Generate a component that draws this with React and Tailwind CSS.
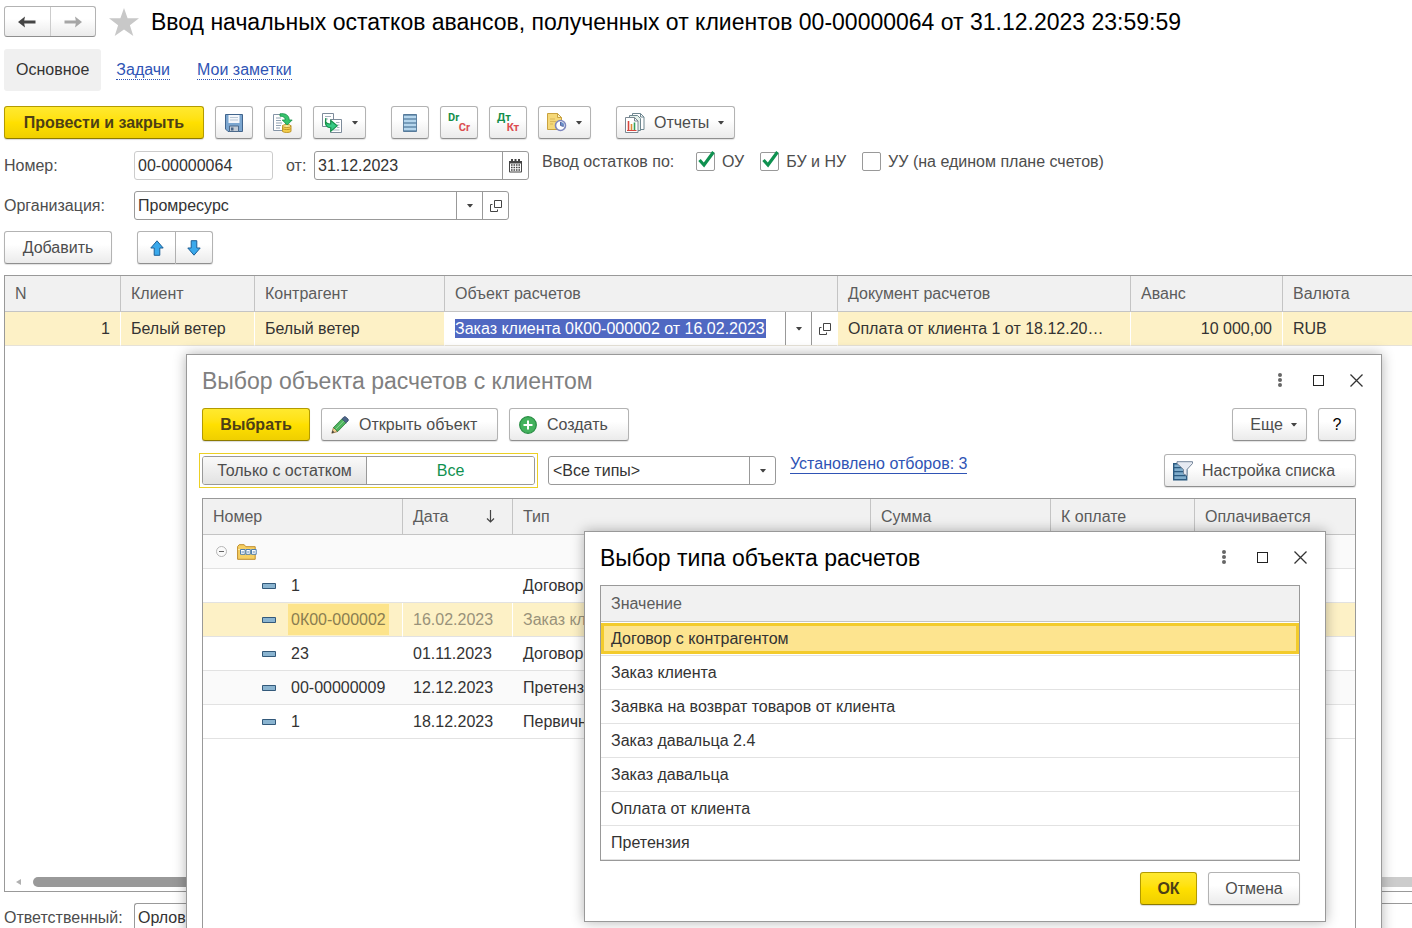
const FONT = "font-['Liberation_Sans',Arial,sans-serif]";

const BTN =
    'flex h-[33px] shrink-0 items-center rounded-[3px] border border-[#b3b3b3] border-b-[#8f8f8f] bg-linear-to-b from-white from-40% to-[#ebebeb] text-[#4d4d4d] shadow-[0_1px_1px_rgba(0,0,0,0.12)]';

const PRIMARY =
    'flex h-[33px] shrink-0 items-center justify-center rounded-[3px] border border-[#b39b00] border-b-[#8c7a00] bg-linear-to-b from-[#ffe92e] via-[#ffe000] to-[#efcf00] font-bold text-[#4d4016] shadow-[0_1px_1px_rgba(0,0,0,0.15)]';

const FIELD = 'flex h-[29px] shrink-0 overflow-hidden rounded-[3px] border border-[#999] bg-white text-[#333]';

const FIELD_BTN = 'flex w-[26px] shrink-0 items-center justify-center border-l border-[#999]';

/* ---------- icons ---------- */

function Caret() {
    return (
        <svg width="6" height="4" viewBox="0 0 6 4" fill="#444">
            <path d="M0 0h6L3.500 3.300h-1z" />
        </svg>
    );
}

function OpenIcon() {
    return (
        <svg width="14" height="14" viewBox="0 0 14 14" fill="none" stroke="#444">
            <path d="M5.500 1.500h7v7h-7z" />
            <path d="M3.500 5.500h-2v7h7v-2" />
        </svg>
    );
}

function ArrowIcon({ color, flip }) {
    return (
        <svg width="18" height="12" viewBox="0 0 18 12" fill={color} className={flip ? 'rotate-180' : ''}>
            <path d="M0 6 7 .5 6.200 4.500H17.500v3H6.200L7 11.500z" />
        </svg>
    );
}

function StarIcon() {
    return (
        <svg width="30" height="28" viewBox="0 0 30 28" fill="#c8c8c8">
            <path d="M15 0l3.600 10.300H30l-9.100 6.900L24.300 28 15 21.500 5.700 28l3.400-10.800L0 10.300h11.400z" />
        </svg>
    );
}

function SaveIcon() {
    return (
        <svg width="18" height="18" viewBox="0 0 18 18">
            <path d="M.5.5h17v17H3l-2.500-2.500z" fill="#7ba6d0" stroke="#41648c" />
            <path d="M3.500 1h11v8h-11z" fill="#f4f7fb" />
            <path d="M5 3.500h8M5 6h8" stroke="#b9c7d6" />
            <path d="M4.500 12h9v5.500h-9z" fill="#c3ccd6" stroke="#4c6a8c" />
            <path d="M6 13.500h2.500v3H6z" fill="#4b6687" />
        </svg>
    );
}

function PostIcon() {
    return (
        <svg width="20" height="20" viewBox="0 0 20 20">
            <path d="M.5 1.500h12v16H.5z" fill="#fff" stroke="#8494a6" />
            <path d="M3 5h5M3 7.500h5M3 10h6M3 12.500h5M3 15h4" stroke="#93a3b3" />
            <path d="M9.500 12.500v6c1.500 1.300 7 1.300 8.500 0v-6z" fill="#f5cf4c" stroke="#bf962a" />
            <ellipse cx="13.750" cy="13" rx="4.250" ry="1.500" fill="#fdeb9c" stroke="#bf962a" />
            <path d="M9.500 15.700c1.500 1.200 7 1.200 8.500 0" stroke="#bf962a" fill="none" />
            <path d="M7 .8c5-.8 9.200 1.200 9.200 6.200h3l-5 5-5-5h3c0-2.600-2-4-5.200-3.800z" fill="#37c46c" stroke="#149148" strokeWidth=".8" />
        </svg>
    );
}

function BasedOnIcon() {
    return (
        <svg width="21" height="20" viewBox="0 0 21 20">
            <path d="M.5.5h11v13H.5z" fill="#fff" stroke="#7d8b9a" />
            <path d="M3 3.500h6M3 6h3" stroke="#a6b2be" />
            <path d="M8.500 6.500h11v13h-11z" fill="#fff" stroke="#7d8b9a" />
            <path d="M14 9.500h3.500M15 12h2.500M15 14.500h2.500M11 17h6.500" stroke="#a6b2be" />
            <path d="M3.800 5v4.200c1.200 1.600 2.700 2 5 1.800V7.500l6.400 5.300-6.400 5.400v-3.400C4.500 15 2.500 12 3.800 5z" fill="#37c984" stroke="#149148" strokeWidth="1.100" />
        </svg>
    );
}

function ListIcon() {
    return (
        <svg width="14" height="18" viewBox="0 0 14 18">
            <path d="M.5.5h13v17H.5z" fill="#a5cbe6" stroke="#6285a4" />
            <path d="M.5 1h13M.5 5h13M.5 9h13M.5 13h13M.5 17h13" stroke="#4b708f" strokeWidth="1.200" />
            <path d="M1 3h12M1 7h12M1 11h12M1 15h12" stroke="#c7e1f3" />
        </svg>
    );
}

function LedgerIcon({ top, bottom }) {
    return (
        <span className="flex w-[22px] flex-col font-['Roboto',sans-serif] text-[11px] leading-[10px] font-bold">
            <span className="self-start text-[#148f4c]">{top}</span>
            <span className="self-end text-[#dc4c50]">{bottom}</span>
        </span>
    );
}

function DocClockIcon() {
    return (
        <svg width="20" height="19" viewBox="0 0 20 19">
            <path d="M.5.5h10l4 4v12H.5z" fill="#f5d878" stroke="#c9a23f" />
            <path d="M10.500.5v4h4z" fill="#fdf2c4" stroke="#c9a23f" />
            <path d="M3 6h5M3 8.500h6M3 11h3" stroke="#d9b75a" />
            <circle cx="13.500" cy="12.500" r="5" fill="#fff" stroke="#7d86bd" strokeWidth="1.600" />
            <path d="M13.500 12.500V8.700a3.800 3.800 0 0 1 3.500 4.800z" fill="#6b8fc9" />
            <path d="M13.500 9v3.500l3 1" stroke="#5866a0" fill="none" />
        </svg>
    );
}

function ReportIcon() {
    return (
        <svg width="20" height="20" viewBox="0 0 20 20">
            <path d="M7.500.5h8l3.500 3.500v12.500H7.500z" fill="#fff" stroke="#6f8790" />
            <path d="M15.500.5V4H19" fill="none" stroke="#6f8790" />
            <path d="M4.500 2.500h8l3 3v12h-11z" fill="#e4f1ea" stroke="#6f8790" />
            <path d="M.5 4.500h9l3.500 3.500v11.500H.5z" fill="#fff" stroke="#7b8791" />
            <path d="M9.500 4.500V8H13" fill="none" stroke="#7b8791" />
            <path d="M3.500 8v9" stroke="#d8463c" strokeWidth="1.600" />
            <path d="M6.500 11v6" stroke="#e08b32" strokeWidth="1.600" />
            <path d="M9.500 9.500V17" stroke="#35a05b" strokeWidth="1.600" />
            <path d="M2 17.500h9.500" stroke="#d8463c" />
        </svg>
    );
}

function CalendarIcon() {
    return (
        <svg width="13" height="14" viewBox="0 0 13 14">
            <path d="M0 2h13v10.500q0 1-1 1H1q-1 0-1-1z" fill="#444" />
            <path d="M2 0h2v3H2zM5.500 0h2v3h-2zM9 0h2v3H9z" fill="#444" />
            <path d="M1 4.500h11v8H1z" fill="#fff" />
            <path d="M2 6h9M2 8.500h9M2 11h9" stroke="#444" strokeWidth="1.500" strokeDasharray="1.600 .87" />
        </svg>
    );
}

function MoveIcon({ flip }) {
    return (
        <svg width="14" height="16" viewBox="0 0 14 16" className={flip ? 'rotate-180' : ''}>
            <path d="M7 .8 13.200 8H9.800v7.300H4.200V8H.8z" fill="#3aa9ec" stroke="#1c5f96" strokeLinejoin="round" />
        </svg>
    );
}

function PencilIcon() {
    return (
        <svg width="18" height="18" viewBox="0 0 18 18">
            <path d="M.8 17.200 2.500 11.500l4.200 4z" fill="#f0cf94" stroke="#8a6a35" strokeWidth=".8" />
            <path d="M.8 17.200l.8-2.600 1.800 1.700z" fill="#3b3b3b" />
            <path d="M2.500 11.500 11 2.800l4.200 4-8.500 8.700z" fill="#4db35c" stroke="#2c7a3c" strokeWidth=".8" />
            <path d="M4.600 13.300 13 4.700" stroke="#8fd698" />
            <path d="M11 2.800 12.800 1q1-.8 2 0l2.200 2q.8 1 0 2l-1.800 1.800z" fill="#4c6689" stroke="#35496a" strokeWidth=".8" />
        </svg>
    );
}

function PlusIcon() {
    return (
        <svg width="18" height="18" viewBox="0 0 18 18">
            <circle cx="9" cy="9" r="8.300" fill="#43b25d" stroke="#268c42" strokeWidth="1.200" />
            <path d="M9 4.500v9M4.500 9h9" stroke="#fff" strokeWidth="2" />
        </svg>
    );
}

function ListSettingsIcon() {
    return (
        <svg width="20" height="20" viewBox="0 0 20 20">
            <path d="M.7 2.700h13v16H.7z" fill="#7faccb" stroke="#2b5a80" strokeWidth="1.400" />
            <path d="M1 6.700h12.500M1 10.700h12.500M1 14.700h12.500" stroke="#2b5a80" strokeWidth="1.300" />
            <path d="M4 .7h15.500v1.800L14 8.500v6.300l-3.500-2V8.500L4 2.500z" fill="#e6eaf2" stroke="#76869a" />
        </svg>
    );
}

function FolderIcon() {
    return (
        <svg width="20" height="16" viewBox="0 0 20 16">
            <path d="M.6 15.300V2.500L2.200.7h5l1.600 2h9.400v12.600z" fill="#f6cf62" stroke="#bf8d2c" />
            <path d="M1 5.500h17" stroke="#fbe7a5" />
            <path d="M3.500 5.500h4.600v4.800H3.500zM9 5.500h4.300v4.800H9zM14.500 5.500h4.700v4.800h-4.700z" fill="#fff" stroke="#4f7fae" />
            <path d="M4.500 8h2.600M10.200 8h2M15.700 8h2.200" stroke="#4f7fae" />
        </svg>
    );
}

function CollapseIcon() {
    return (
        <svg width="11" height="11" viewBox="0 0 11 11" fill="none">
            <circle cx="5.500" cy="5.500" r="5" stroke="#b5b5b5" />
            <path d="M3 5.500h5" stroke="#666" />
        </svg>
    );
}

function ItemIcon() {
    return (
        <svg width="14" height="6" viewBox="0 0 14 6">
            <path d="M.5.5h13v5H.5z" fill="#8ab4d0" stroke="#33597a" />
        </svg>
    );
}

function SortIcon() {
    return (
        <svg width="9" height="13" viewBox="0 0 9 13" fill="none" stroke="#444">
            <path d="M4.500 0v12M1 8.500l3.500 3.500L8 8.500" strokeWidth="1.200" />
        </svg>
    );
}

/* ---------- shared pieces ---------- */

function IconButton({ label, menu, children }) {
    return menu ? (
        <button type="button" aria-label={label} className={`${BTN} w-[53px] justify-center gap-[9px]`}>
            {children}
            <Caret />
        </button>
    ) : (
        <button type="button" aria-label={label} className={`${BTN} w-[38px] justify-center`}>
            {children}
        </button>
    );
}

function Check({ label, checked }) {
    return (
        <label className="flex items-center gap-[7px] whitespace-nowrap">
            <span className="grid">
                <input
                    type="checkbox"
                    defaultChecked={checked}
                    className="peer size-[19px] appearance-none rounded-[2px] border border-[#999] bg-white [grid-area:1/1]"
                />
                <svg
                    width="19"
                    height="19"
                    viewBox="0 0 19 19"
                    fill="none"
                    className="pointer-events-none invisible overflow-visible [grid-area:1/1] peer-checked:visible"
                >
                    <path d="M3.500 8 8 13 17.500 0" stroke="#0f9150" strokeWidth="3.200" />
                </svg>
            </span>
            {label}
        </label>
    );
}

function WindowControls() {
    return (
        <div className="flex items-center pb-[2px]">
            <button type="button" aria-label="Меню" className="flex w-6 justify-center">
                <svg width="4" height="14" viewBox="0 0 4 14" fill="#666">
                    <circle cx="2" cy="2" r="2" />
                    <circle cx="2" cy="7" r="2" />
                    <circle cx="2" cy="12" r="2" />
                </svg>
            </button>
            <button type="button" aria-label="Развернуть" className="ml-[14px] flex w-6 justify-center">
                <span className="size-[11px] border border-[#222]" />
            </button>
            <button type="button" aria-label="Закрыть" className="ml-[14px] flex w-6 justify-center">
                <svg width="13" height="13" viewBox="0 0 13 13" stroke="#333" strokeWidth="1.300">
                    <path d="M.5.5l12 12M12.500.5l-12 12" />
                </svg>
            </button>
        </div>
    );
}

/* ---------- main form ---------- */

function Header() {
    return (
        <header className="flex h-[31px] items-center">
            <div className="flex h-[31px] w-[92px] shrink-0 rounded-[3px] border border-[#b3b3b3] border-b-[#8f8f8f] bg-linear-to-b from-white from-40% to-[#ebebeb]">
                <button type="button" aria-label="Назад" className="flex flex-1 items-center justify-center border-r border-[#ccc]">
                    <ArrowIcon color="#444" />
                </button>
                <button type="button" aria-label="Вперед" className="flex flex-1 items-center justify-center">
                    <ArrowIcon color="#a6a6a6" flip />
                </button>
            </div>
            <button type="button" aria-label="В избранное" className="ml-[13px] shrink-0">
                <StarIcon />
            </button>
            <h1 className="ml-3 truncate text-[23px] leading-[30px] text-black">
                Ввод начальных остатков авансов, полученных от клиентов 00-00000064 от 31.12.2023 23:59:59
            </h1>
        </header>
    );
}

function Tabs() {
    return (
        <nav className="mt-3 flex h-[42px] items-center">
            <a href="#main" className="flex h-[42px] items-center rounded-[3px] bg-[#f0f0f0] px-3 text-[#333]">
                Основное
            </a>
            <a href="#tasks" className="ml-[15px] border-b border-dotted border-[#2f54b5] leading-[18px] text-[#2f54b5]">
                Задачи
            </a>
            <a href="#notes" className="ml-[27px] border-b border-dotted border-[#2f54b5] leading-[18px] text-[#2f54b5]">
                Мои заметки
            </a>
        </nav>
    );
}

function Toolbar() {
    return (
        <div className="mt-[15px] flex gap-[11px]">
            <button type="button" className={`${PRIMARY} w-[200px]`}>Провести и закрыть</button>
            <IconButton label="Записать"><SaveIcon /></IconButton>
            <IconButton label="Провести"><PostIcon /></IconButton>
            <IconButton label="Создать на основании" menu><BasedOnIcon /></IconButton>
            <div className="ml-[14px] flex gap-[11px]">
                <IconButton label="Движения документа"><ListIcon /></IconButton>
                <IconButton label="Проводки международного учета"><LedgerIcon top="Dr" bottom="Cr" /></IconButton>
                <IconButton label="Проводки"><LedgerIcon top="Дт" bottom="Кт" /></IconButton>
                <IconButton label="История" menu><DocClockIcon /></IconButton>
            </div>
            <button type="button" className={`${BTN} ml-[14px] w-[119px] gap-[9px] pl-2`}>
                <ReportIcon />
                Отчеты
                <Caret />
            </button>
        </div>
    );
}

function Fields() {
    return (
        <>
            <div className="mt-3 flex h-[29px] items-center">
                <label htmlFor="number" className="w-[130px] shrink-0">Номер:</label>
                <input
                    id="number"
                    defaultValue="00-00000064"
                    className="h-[29px] w-[139px] rounded-[3px] border border-[#ccc] px-[3px] text-[#333]"
                />
                <label htmlFor="date" className="ml-[13px] w-7">от:</label>
                <div className={`${FIELD} w-[215px]`}>
                    <input id="date" defaultValue="31.12.2023" className="min-w-0 flex-1 px-[3px]" />
                    <button type="button" aria-label="Выбрать дату" className={FIELD_BTN}>
                        <CalendarIcon />
                    </button>
                </div>
                <div className="mb-2 ml-[13px] flex items-center gap-4">
                    <span className="w-[138px] whitespace-nowrap">Ввод остатков по:</span>
                    <Check label="ОУ" checked />
                    <Check label="БУ и НУ" checked />
                    <Check label="УУ (на едином плане счетов)" />
                </div>
            </div>
            <div className="mt-[11px] flex h-[29px] items-center">
                <label htmlFor="org" className="w-[130px] shrink-0">Организация:</label>
                <div className={`${FIELD} w-[375px]`}>
                    <input id="org" defaultValue="Промресурс" className="min-w-0 flex-1 px-[3px]" />
                    <button type="button" aria-label="Выбрать организацию" className={FIELD_BTN}>
                        <Caret />
                    </button>
                    <button type="button" aria-label="Открыть организацию" className={FIELD_BTN}>
                        <OpenIcon />
                    </button>
                </div>
            </div>
        </>
    );
}

const TH = 'h-9 border-r border-b border-[#c4c4c4] bg-[#f1f1f1] px-[10px] text-left font-normal text-[#5c5c5c] last:border-r-0';
const TD = 'h-[34px] truncate border-r border-r-white border-b border-b-[#e6e2d8] bg-[#fdf1c6] px-[10px] last:border-r-0';

function AdvancesTable() {
    return (
        <div className="mt-[11px] flex min-h-0 flex-1 flex-col justify-between border border-r-0 border-[#999]">
            <table className="w-full table-fixed border-separate border-spacing-0 text-[#333]">
                <colgroup>
                    <col className="w-[116px]" />
                    <col className="w-[134px]" />
                    <col className="w-[190px]" />
                    <col className="w-[393px]" />
                    <col className="w-[293px]" />
                    <col className="w-[152px]" />
                    <col />
                </colgroup>
                <thead>
                    <tr>
                        <th className={TH}>N</th>
                        <th className={TH}>Клиент</th>
                        <th className={TH}>Контрагент</th>
                        <th className={TH}>Объект расчетов</th>
                        <th className={TH}>Документ расчетов</th>
                        <th className={TH}>Аванс</th>
                        <th className={TH}>Валюта</th>
                    </tr>
                </thead>
                <tbody>
                    <tr>
                        <td className={`${TD} text-right`}>1</td>
                        <td className={TD}>Белый ветер</td>
                        <td className={TD}>Белый ветер</td>
                        <td className="h-[34px] border-r border-b border-r-white border-b-[#e6e2d8] bg-white p-0">
                            <div className="flex h-[33px] items-center pl-[10px]">
                                <input
                                    aria-label="Объект расчетов"
                                    defaultValue="Заказ клиента 0К00-000002 от 16.02.2023"
                                    className="h-[19px] w-[311px] bg-[#5068c2] text-white"
                                />
                                <button type="button" aria-label="Выбрать объект" className={`${FIELD_BTN} ml-auto h-[33px]`}>
                                    <Caret />
                                </button>
                                <button type="button" aria-label="Открыть объект" className={`${FIELD_BTN} h-[33px]`}>
                                    <OpenIcon />
                                </button>
                            </div>
                        </td>
                        <td className={TD}>Оплата от клиента 1 от 18.12.20…</td>
                        <td className={`${TD} text-right`}>10 000,00</td>
                        <td className={TD}>RUB</td>
                    </tr>
                </tbody>
            </table>
            <div className="mb-1 flex h-[10px] items-center">
                <svg width="5" height="6" viewBox="0 0 5 6" fill="#b0b0b0" className="ml-[11px]">
                    <path d="M5 0v6L0 3z" />
                </svg>
                <div className="ml-3 h-[10px] w-3/4 rounded-full bg-[#999]" />
                <div className="h-[10px] flex-1 bg-[#ccc]" />
            </div>
        </div>
    );
}

/* ---------- settlement object dialog ---------- */

const OBJECTS = [
    { number: '1', date: '', type: 'Договор', row: 'bg-white' },
    { number: '0К00-000002', date: '16.02.2023', type: 'Заказ клиента', selected: true },
    { number: '23', date: '01.11.2023', type: 'Договор', row: 'bg-white' },
    { number: '00-00000009', date: '12.12.2023', type: 'Претензия', row: 'bg-[#fafafa]' },
    { number: '1', date: '18.12.2023', type: 'Первичный документ', row: 'bg-white' },
];

function ObjectRow({ number, date, type, selected, row }) {
    const cell = selected
        ? 'h-[34px] border-r border-b border-r-white border-b-[#e2e2e2] px-[10px] last:border-r-0'
        : 'h-[34px] border-b border-[#e2e2e2] px-[10px]';

    return (
        <tr className={selected ? 'bg-[#fdf1c6] text-[#99927a]' : row}>
            <td className={`${cell} whitespace-nowrap`}>
                <div className="flex items-center pl-[49px]">
                    <ItemIcon />
                    <span className={selected ? 'ml-3 bg-[#fde48c] px-[3px] leading-[31px] text-[#8a7d50]' : 'ml-3 px-[3px]'}>
                        {number}
                    </span>
                </div>
            </td>
            <td className={cell}>{date}</td>
            <td className={cell}>{type}</td>
            <td className={cell} />
            <td className={cell} />
            <td className={cell} />
        </tr>
    );
}

function ObjectDialog() {
    return (
        <section
            role="dialog"
            aria-labelledby="object-title"
            className="absolute top-[354px] right-[30px] -bottom-4 left-[186px] flex flex-col border border-[#999] bg-white px-[15px] pt-[11px] shadow-[0_0_12px_rgba(0,0,0,0.3)]"
        >
            <div className="-mr-[2px] flex h-[30px] items-center justify-between">
                <h2 id="object-title" className="text-[23px] leading-[30px] text-[#808080]">
                    Выбор объекта расчетов с клиентом
                </h2>
                <WindowControls />
            </div>
            <div className="mt-3 mr-[10px] flex gap-[11px]">
                <button type="button" className={`${PRIMARY} w-[108px]`}>Выбрать</button>
                <button type="button" className={`${BTN} w-[177px] gap-[10px] pl-[9px]`}>
                    <PencilIcon />
                    Открыть объект
                </button>
                <button type="button" className={`${BTN} w-[120px] gap-[10px] pl-[9px]`}>
                    <PlusIcon />
                    Создать
                </button>
                <button type="button" className={`${BTN} ml-auto w-[75px] justify-center gap-2 pl-2`}>
                    Еще
                    <Caret />
                </button>
                <button type="button" className={`${BTN} w-[38px] justify-center text-black`}>?</button>
            </div>
            <div className="mt-3 mr-[10px] -ml-[3px] flex h-[35px] items-center">
                <div className="w-[339px] shrink-0 border border-[#ecd024] p-[2px]">
                    <div className="flex h-[29px] overflow-hidden rounded-[3px] border border-[#999]">
                        <button
                            type="button"
                            aria-pressed="false"
                            className="w-[164px] border-r border-[#999] bg-linear-to-b from-[#fafafa] to-[#e2e2e2] text-[#4d4d4d]"
                        >
                            Только с остатком
                        </button>
                        <button type="button" aria-pressed="true" className="flex-1 bg-white text-[#0f9150]">
                            Все
                        </button>
                    </div>
                </div>
                <div className={`${FIELD} ml-[10px] w-[228px]`}>
                    <select aria-label="Тип объекта" className="min-w-0 flex-1 appearance-none px-1">
                        <option>&lt;Все типы&gt;</option>
                    </select>
                    <span className={`${FIELD_BTN} pointer-events-none`}>
                        <Caret />
                    </span>
                </div>
                <a href="#filters" className="mb-3 ml-[14px] border-b border-[#2f54b5] leading-[18px] whitespace-nowrap text-[#2f54b5]">
                    Установлено отборов: 3
                </a>
                <button type="button" className={`${BTN} ml-auto w-[192px] gap-[9px] pl-2`}>
                    <ListSettingsIcon />
                    Настройка списка
                </button>
            </div>
            <div className="mt-[10px] mr-[10px] flex-1 border border-b-0 border-[#999]">
                <table className="w-full table-fixed border-separate border-spacing-0 text-[#333]">
                    <colgroup>
                        <col className="w-[200px]" />
                        <col className="w-[110px]" />
                        <col />
                        <col className="w-[180px]" />
                        <col className="w-[144px]" />
                        <col className="w-[160px]" />
                    </colgroup>
                    <thead>
                        <tr>
                            <th className={TH}>Номер</th>
                            <th className={TH}>
                                <div className="flex items-center justify-between pr-[7px]">
                                    Дата
                                    <SortIcon />
                                </div>
                            </th>
                            <th className={TH}>Тип</th>
                            <th className={TH}>Сумма</th>
                            <th className={TH}>К оплате</th>
                            <th className={TH}>Оплачивается</th>
                        </tr>
                    </thead>
                    <tbody>
                        <tr className="bg-[#fafafa]">
                            <td colSpan={6} className="h-[34px] border-b border-[#e2e2e2] px-[13px]">
                                <div className="flex items-center gap-[10px]">
                                    <CollapseIcon />
                                    <FolderIcon />
                                </div>
                            </td>
                        </tr>
                        {OBJECTS.map((item, i) => (
                            <ObjectRow key={i} {...item} />
                        ))}
                    </tbody>
                </table>
            </div>
        </section>
    );
}

/* ---------- object type dialog ---------- */

const TYPES = [
    'Договор с контрагентом',
    'Заказ клиента',
    'Заявка на возврат товаров от клиента',
    'Заказ давальца 2.4',
    'Заказ давальца',
    'Оплата от клиента',
    'Претензия',
];

function TypeDialog() {
    return (
        <section
            role="dialog"
            aria-labelledby="type-title"
            className="absolute top-[531px] right-[86px] left-[584px] border border-[#999] bg-white px-[15px] pt-[11px] pb-4 shadow-[0_0_12px_rgba(0,0,0,0.3)]"
        >
            <div className="-mr-[2px] flex h-[30px] items-center justify-between">
                <h2 id="type-title" className="text-[23px] leading-[30px] text-black">
                    Выбор типа объекта расчетов
                </h2>
                <WindowControls />
            </div>
            <div className="mt-3 mr-[10px] border border-[#999]">
                <table className="w-full border-separate border-spacing-0 text-[#333]">
                    <thead>
                        <tr>
                            <th className={TH}>Значение</th>
                        </tr>
                    </thead>
                    <tbody>
                        {TYPES.map((type, i) => (
                            <tr key={type}>
                                <td
                                    className={
                                        i === 0
                                            ? 'h-[34px] border-b border-[#e2e2e2] py-px'
                                            : 'h-[34px] border-b border-[#e2e2e2] px-[10px]'
                                    }
                                >
                                    {i === 0 ? (
                                        <div className="border-[3px] border-[#f3cb2c] bg-[#fde48f] px-[7px] leading-[25px]">{type}</div>
                                    ) : (
                                        type
                                    )}
                                </td>
                            </tr>
                        ))}
                    </tbody>
                </table>
            </div>
            <div className="mt-[11px] mr-[10px] flex justify-end gap-[11px]">
                <button type="button" className={`${PRIMARY} w-[57px]`}>ОК</button>
                <button type="button" className={`${BTN} w-[92px] justify-center`}>Отмена</button>
            </div>
        </section>
    );
}

export default function App() {
    return (
        <div className={`${FONT} relative h-screen overflow-hidden bg-white text-[16px] leading-[20px] text-[#4d4d4d]`}>
            <main className="flex h-full flex-col pt-[6px] pl-1">
                <Header />
                <Tabs />
                <Toolbar />
                <Fields />
                <div className="mt-[11px] flex gap-[25px]">
                    <button type="button" className={`${BTN} w-[108px] justify-center`}>Добавить</button>
                    <div className="flex">
                        <button type="button" aria-label="Переместить вверх" className={`${BTN} w-[39px] justify-center rounded-r-none`}>
                            <MoveIcon />
                        </button>
                        <button type="button" aria-label="Переместить вниз" className={`${BTN} w-[37px] justify-center rounded-l-none border-l-0`}>
                            <MoveIcon flip />
                        </button>
                    </div>
                </div>
                <AdvancesTable />
                <div className="mt-[11px] -mb-1 flex h-[29px] shrink-0 items-center">
                    <label htmlFor="responsible" className="w-[130px] shrink-0">Ответственный:</label>
                    <input
                        id="responsible"
                        defaultValue="Орлов"
                        className="h-[29px] min-w-0 flex-1 rounded-l-[3px] border border-r-0 border-[#999] px-[3px] text-[#333]"
                    />
                </div>
            </main>
            <ObjectDialog />
            <TypeDialog />
        </div>
    );
}
